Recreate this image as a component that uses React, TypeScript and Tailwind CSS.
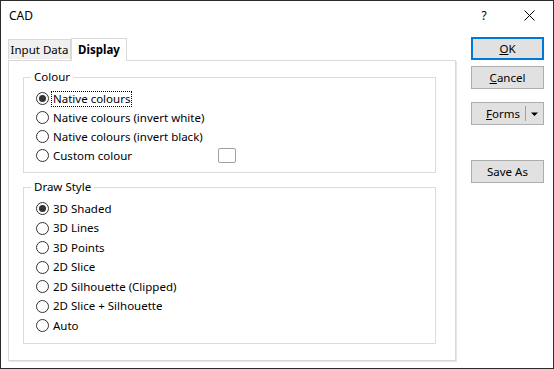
import React from "react";

const colourOptions = [
  "Native colours",
  "Native colours (invert white)",
  "Native colours (invert black)",
  "Custom colour",
];

const drawStyles = [
  "3D Shaded",
  "3D Lines",
  "3D Points",
  "2D Slice",
  "2D Silhouette (Clipped)",
  "2D Slice + Silhouette",
  "Auto",
];

function Radio({ checked }: { checked?: boolean }) {
  return (
    <span className="w-[13px] h-[13px] rounded-full border border-[#333] bg-white flex items-center justify-center shrink-0">
      {checked && <span className="w-[7px] h-[7px] rounded-full bg-[#333]" />}
    </span>
  );
}

function Button({ children, primary }: { children: React.ReactNode; primary?: boolean }) {
  return (
    <div
      className={
        "h-[23px] w-[73px] flex items-center justify-center bg-[#e1e1e1] text-black " +
        (primary ? "border-2 border-[#0078d7]" : "border border-[#adadad]")
      }
    >
      {children}
    </div>
  );
}

export default function App() {
  return (
    <div
      className="w-[554px] h-[369px] border border-[#2b2b2b] bg-white flex flex-col text-[11.5px] text-black overflow-hidden"
      style={{ fontFamily: '"Noto Sans", "Open Sans", sans-serif' }}
    >
      {/* Title bar */}
      <div className="h-[29px] flex items-center pl-[8px] shrink-0 text-[12px]">
        <span className="flex-1">CAD</span>
        <span className="w-[12px] text-center mr-[34px]">?</span>
        <svg width="11" height="11" viewBox="0 0 11 11" className="mr-[18px]">
          <path d="M0.5 0.5L10.5 10.5M10.5 0.5L0.5 10.5" stroke="#000" strokeWidth="1" />
        </svg>
      </div>

      <div className="flex flex-1 pl-[7px] pr-[9px] pt-[7px] pb-[7px]">
        {/* Tabs + panel */}
        <div className="w-[448px] flex flex-col">
          <div className="flex items-end h-[23px]">
            <div className="h-[20px] w-[63px] bg-[#f0f0f0] border border-[#d9d9d9] border-b-0 flex items-center justify-center mb-px">
              Input Data
            </div>
            <div className="relative z-10 h-[23px] w-[56px] bg-white border border-[#d9d9d9] border-b-0 -mb-px flex items-center justify-center font-bold">
              Display
            </div>
          </div>
          <div className="flex-1 border border-[#d9d9d9] shadow-[1px_1px_0_#e6e6e6] pl-[14px] pr-[19px] pt-[8px]">
            <fieldset className="border border-[#dcdcdc] pl-[12px] pb-[7px]">
              <legend className="ml-[-5px] px-[3px] leading-[16px]">Colour</legend>
              <div className="pt-[4px] flex flex-col">
                {colourOptions.map((label, i) => (
                  <div key={label} className="h-[19px] flex items-center">
                    <Radio checked={i === 0} />
                    <span
                      className={
                        "ml-[2px] leading-[14px] px-px " +
                        (i === 0 ? "border border-dotted border-black" : "border border-transparent")
                      }
                    >
                      {label}
                    </span>
                    {i === 3 && (
                      <span className="ml-auto mr-[199px] w-[18px] h-[15px] border border-[#a0a0a0] rounded-[2px] bg-white" />
                    )}
                  </div>
                ))}
              </div>
            </fieldset>

            <fieldset className="mt-[6px] border border-[#dcdcdc] pl-[12px] pb-[7px]">
              <legend className="ml-[-5px] px-[3px] leading-[16px]">Draw Style</legend>
              <div className="pt-[4px] flex flex-col">
                {drawStyles.map((label, i) => (
                  <div key={label} className="h-[19.5px] flex items-center">
                    <Radio checked={i === 0} />
                    <span className="ml-[2px] px-px border border-transparent leading-[14px]">{label}</span>
                  </div>
                ))}
              </div>
            </fieldset>
          </div>
        </div>

        {/* Buttons */}
        <div className="ml-auto flex flex-col">
          <Button primary>
            <span className="underline">O</span>K
          </Button>
          <div className="mt-[6px]">
            <Button>
              <span className="underline">C</span>ancel
            </Button>
          </div>
          <div className="mt-[13px] h-[23px] w-[73px] bg-[#e1e1e1] border border-[#adadad] flex items-center">
            <span className="flex-1 text-right pr-[5px]">
              <span className="underline">F</span>orms
            </span>
            <span className="w-px h-[15px] bg-[#a0a0a0]" />
            <svg width="17" height="8" viewBox="0 0 17 8">
              <path d="M5 2.5H12L8.5 6Z" fill="#000" />
            </svg>
          </div>
          <div className="mt-[35px]">
            <Button>Save As</Button>
          </div>
        </div>
      </div>
    </div>
  );
}
